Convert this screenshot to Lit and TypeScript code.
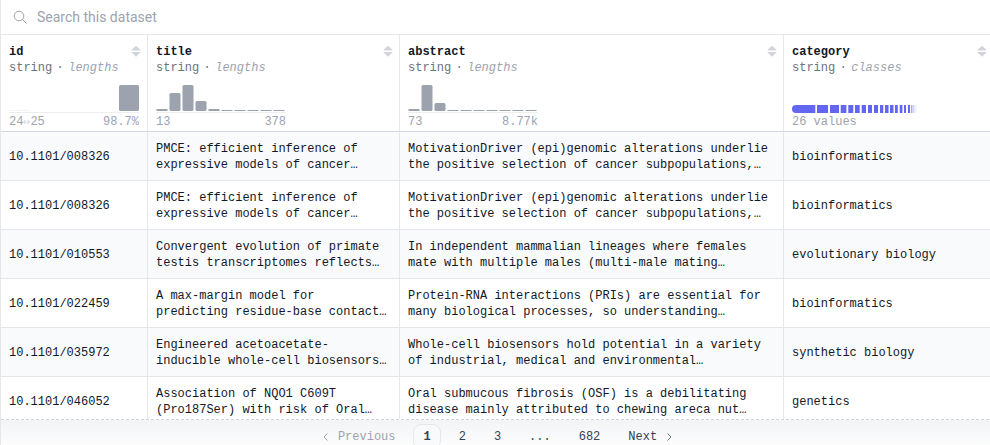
import { LitElement, html, svg, css } from "lit";
import { customElement, property } from "lit/decorators.js";
import { classMap } from "lit/directives/class-map.js";

interface Column {
  name: string;
  type: string;
  stat: string;
  bars: number[];
  from: string;
  to: string;
}

const COLUMNS: Column[] = [
  { name: "id", type: "string", stat: "lengths", bars: [1, 26], from: "24-25", to: "98.7%" },
  { name: "title", type: "string", stat: "lengths", bars: [2, 18, 26, 10, 2, 1, 1, 1, 1, 1], from: "13", to: "378" },
  { name: "abstract", type: "string", stat: "lengths", bars: [2, 26, 8, 1, 1, 1, 1, 1, 1, 1], from: "73", to: "8.77k" },
  { name: "category", type: "string", stat: "classes", bars: [], from: "26 values", to: "" },
];

// Each class share: start, width, opacity
const CLASSES: [number, number, number][] = [
  [25, 11, 1], [38, 9, 1], [48.7, 5.7, 1], [56.3, 5, 1], [63, 4.7, 1], [69.7, 4.3, 1],
  [76, 4, 1], [82, 4, 1], [88, 3.3, 1], [93, 3.5, 1], [98, 3.5, 1], [103, 2.8, 1],
  [107.7, 2.7, 1], [112, 2, 1], [116, 2, 1], [119.3, 1, 0.8], [121.3, 1, 0.4], [123.3, 1, 0.15],
];

const ROWS: [string, string[], string[], string][] = [
  ["10.1101/008326", ["PMCE: efficient inference of", "expressive models of cancer…"],
    ["MotivationDriver (epi)genomic alterations underlie", "the positive selection of cancer subpopulations,…"], "bioinformatics"],
  ["10.1101/008326", ["PMCE: efficient inference of", "expressive models of cancer…"],
    ["MotivationDriver (epi)genomic alterations underlie", "the positive selection of cancer subpopulations,…"], "bioinformatics"],
  ["10.1101/010553", ["Convergent evolution of primate", "testis transcriptomes reflects…"],
    ["In independent mammalian lineages where females", "mate with multiple males (multi-male mating…"], "evolutionary biology"],
  ["10.1101/022459", ["A max-margin model for", "predicting residue-base contact…"],
    ["Protein-RNA interactions (PRIs) are essential for", "many biological processes, so understanding…"], "bioinformatics"],
  ["10.1101/035972", ["Engineered acetoacetate-", "inducible whole-cell biosensors…"],
    ["Whole-cell biosensors hold potential in a variety", "of industrial, medical and environmental…"], "synthetic biology"],
  ["10.1101/046052", ["Association of NQO1 C609T", "(Pro187Ser) with risk of Oral…"],
    ["Oral submucous fibrosis (OSF) is a debilitating", "disease mainly attributed to chewing areca nut…"], "genetics"],
];

@customElement("column-chart")
class ColumnChart extends LitElement {
  @property({ attribute: false }) bars: number[] = [];

  static styles = css`
    :host { display: block; }
    svg { display: block; }
    .bar { fill: #9ca3af; }
    .faint { fill: #f3f4f6; }
    .base { fill: #e5e7eb; }
    .share { fill: #6366f1; }
  `;

  render() {
    if (!this.bars.length) {
      return html`<svg width="130" height="28" viewBox="0 0 130 28" aria-hidden="true">
        <path class="share" d="M4 20H23.3V28H4A4 4 0 0 1 4 20Z" />
        ${CLASSES.map(([x, w, o]) => svg`<rect class="share" x=${x} y="20" width=${w} height="8" opacity=${o} />`)}
      </svg>`;
    }
    const wide = this.bars.length === 2;
    return html`<svg width="130" height="28" viewBox="0 0 130 28" aria-hidden="true">
      ${this.bars.map((h, i) => svg`<rect class=${wide && i === 0 ? "faint" : "bar"}
        x=${wide ? i * 110 : i * 13 + 0.5} y=${26 - h} width=${wide ? 20 : 11} height=${h}
        rx=${h > 4 ? 1.5 : 0} />`)}
      <rect class="base" x="0" y="27" width="130" height="1" opacity="0.7" />
    </svg>`;
  }
}

@customElement("data-header")
class DataHeader extends LitElement {
  @property({ attribute: false }) column!: Column;

  static styles = css`
    :host { display: block; color: #9ca3af; }
    .top { display: flex; justify-content: space-between; }
    .name { color: #111827; font-weight: 700; }
    .type { color: #6b7280; }
    .stat { font-style: italic; }
    .meta { display: flex; }
    .dot { width: 16px; text-align: center; color: #6b7280; }
    .sort { width: 10px; height: 16px; padding: 0; border: 0; background: none; color: #d1d5db; }
    .sort svg { display: block; }
    .chart { margin: 9px 0 1px; }
    .labels { display: flex; justify-content: space-between; width: 130px; white-space: nowrap; }
    .range { display: flex; }
    .arrow { width: 7px; color: #d1d5db; display: flex; align-items: center; }
  `;

  render() {
    const c = this.column;
    const [lo, hi] = c.from.split("-");
    return html`
      <div class="top">
        <span class="name">${c.name}</span>
        <button class="sort" aria-label="Sort by ${c.name}">
          <svg width="10" height="16" viewBox="0 1 10 16" fill="currentColor">
            <path d="M5 2.8L9.3 6.8Q9.6 7.4 9 7.5H1Q.4 7.4 .7 6.8Z" />
            <path d="M5 13.8L9.3 9.8Q9.6 9.2 9 9.1H1Q.4 9.2 .7 9.8Z" />
          </svg>
        </button>
      </div>
      <div class="meta"><span class="type">${c.type}</span><span class="dot">·</span><span class="stat">${c.stat}</span></div>
      <column-chart class="chart" .bars=${c.bars}></column-chart>
      <div class="labels">
        ${hi
          ? html`<span class="range">${lo}<span class="arrow"><svg width="7" height="6" viewBox="0 0 7 6" fill="none" stroke="currentColor"><path d="M.5 3H6.5M2.2 1L.5 3L2.2 5M4.8 1L6.5 3L4.8 5" /></svg></span>${hi}</span>`
          : html`<span>${c.from}</span>`}
        <span>${c.to}</span>
      </div>
    `;
  }
}

@customElement("app-root")
class AppRoot extends LitElement {
  static styles = css`
    :host { display: block; height: 100vh; overflow: hidden; background: #fff; }
    .frame {
      box-sizing: border-box; min-width: 994px; border-left: 1px solid #e5e7eb;
      font: 12px/16px "Liberation Mono", monospace; color: #111827;
    }
    .search {
      display: flex; align-items: center; gap: 9px; height: 34px; padding: 0 12px;
      border-bottom: 1px solid #e5e7eb; color: #9ca3af;
    }
    .search input {
      flex: 1; padding: 0; border: 0; outline: 0; background: none; color: #374151;
      font: 14px/20px Roboto, sans-serif;
    }
    .search input::placeholder { color: #9ca3af; opacity: 1; }
    .viewport { max-height: 384px; overflow: hidden; }
    table { width: 100%; table-layout: fixed; border-collapse: separate; border-spacing: 0; }
    .c0 { width: 147px; }
    .c1 { width: 252px; }
    .c2 { width: 384px; }
    th, td { box-sizing: border-box; text-align: left; font-weight: 400; border-right: 1px solid #e5e7eb; }
    th { padding: 9px 6px 1px 8px; border-bottom: 1px solid #d5d8de; vertical-align: top; }
    td { height: 49px; padding: 9px 0 7px 8px; border-bottom: 1px solid #e5e7eb; vertical-align: middle; }
    .odd td { background: #f9fafb; }
    .line { display: block; white-space: nowrap; }
    .pages {
      display: flex; justify-content: center; gap: 8px; padding: 4px 0;
      border-top: 1px dashed #d1d5db; background: linear-gradient(#f3f4f6, #fff);
    }
    .page {
      display: flex; align-items: center; gap: 6px; padding: 4px 9px 3px;
      border: 1px solid transparent; border-radius: 8px; color: #374151; text-decoration: none;
    }
    .current { font-weight: 700; border-color: #e5e7eb; background: #f9fafb; }
    .off { color: #9ca3af; }
    .chevron { color: #9ca3af; }
    .next { color: #6b7280; }
  `;

  page(label: string) {
    return html`<a href="#" class=${classMap({ page: true, current: label === "1" })}>${label}</a>`;
  }

  lines(text: string[]) {
    return text.map((t) => html`<span class="line">${t}</span>`);
  }

  render() {
    return html`
      <div class="frame">
        <label class="search">
          <svg width="15" height="15" viewBox="0 0 15 15" fill="none" stroke="currentColor">
            <circle cx="6" cy="6" r="4.8" /><path d="M9.5 9.5L13.5 13.5" />
          </svg>
          <input type="text" placeholder="Search this dataset" aria-label="Search this dataset" />
        </label>
        <div class="viewport">
          <table>
            <colgroup><col class="c0" /><col class="c1" /><col class="c2" /><col /></colgroup>
            <thead>
              <tr>${COLUMNS.map((c) => html`<th scope="col"><data-header .column=${c}></data-header></th>`)}</tr>
            </thead>
            <tbody>
              ${ROWS.map(([id, title, abstract, category], i) => html`<tr class=${classMap({ odd: i % 2 === 0 })}>
                <td>${id}</td><td>${this.lines(title)}</td><td>${this.lines(abstract)}</td><td>${category}</td>
              </tr>`)}
            </tbody>
          </table>
        </div>
        <nav class="pages" aria-label="Pages">
          <a class="page off" aria-disabled="true">
            <svg class="chevron" width="12" height="12" viewBox="0 0 12 12" fill="none" stroke="currentColor"><path d="M7.5 2.5L4 6L7.5 9.5" /></svg>Previous</a>
          ${["1", "2", "3"].map((p) => this.page(p))}
          <span class="page">...</span>
          ${this.page("682")}
          <a href="#" class="page">Next<svg class="next" width="12" height="12" viewBox="0 0 12 12" fill="none" stroke="currentColor"><path d="M4.5 2.5L8 6L4.5 9.5" /></svg></a>
        </nav>
      </div>
    `;
  }
}
